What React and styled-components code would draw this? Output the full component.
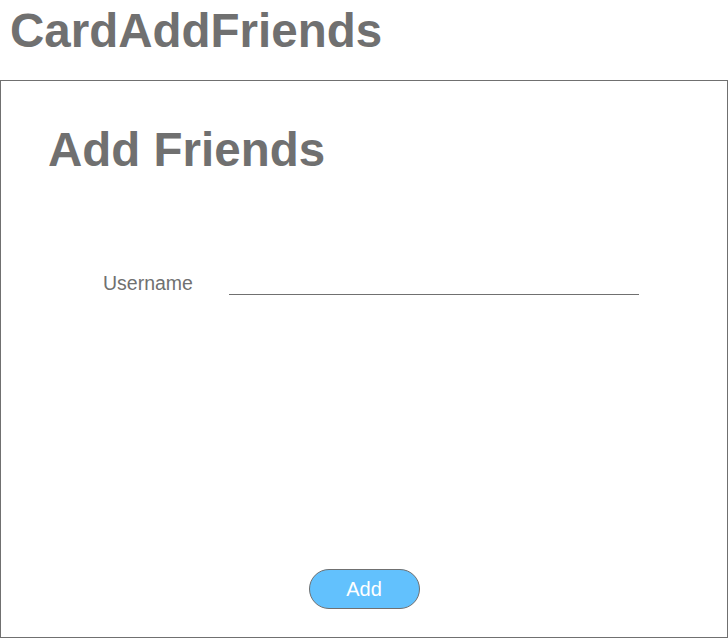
import React from 'react';
import styled, { createGlobalStyle } from 'styled-components';

const GlobalStyle = createGlobalStyle`
  html, body {
    margin: 0;
    padding: 0;
    background: #ffffff;
    font-family: 'Liberation Sans', Arial, sans-serif;
  }
`;

const Page = styled.div`
  width: 728px;
  height: 638px;
  display: flex;
  flex-direction: column;
`;

const PageTitle = styled.h1`
  margin: 0;
  height: 80px;
  padding-left: 10px;
  box-sizing: border-box;
  font-size: 47.5px;
  line-height: 61px;
  font-weight: 700;
  color: #707070;
`;

const Card = styled.div`
  flex: 1;
  border: 1px solid #707070;
  display: flex;
  flex-direction: column;
  padding: 40px 0 28px 47px;
  box-sizing: border-box;
`;

const CardTitle = styled.h2`
  margin: 0;
  font-size: 47.5px;
  line-height: 57px;
  font-weight: 700;
  color: #707070;
`;

const Field = styled.div`
  display: flex;
  align-items: flex-end;
  margin-top: 94px;
  padding-left: 55px;
`;

const Label = styled.label`
  width: 126px;
  font-size: 19.5px;
  color: #707070;
  line-height: 22px;
  padding-bottom: 1px;
`;

const Input = styled.input`
  width: 410px;
  border: none;
  border-bottom: 1px solid #707070;
  outline: none;
  height: 22px;
  padding: 0;
  font-size: 18px;
  font-family: inherit;
  background: transparent;
`;

const Actions = styled.div`
  margin-top: auto;
  display: flex;
  justify-content: center;
  padding-right: 47px;
`;

const Button = styled.button`
  width: 111px;
  height: 40px;
  border-radius: 20px;
  border: 1px solid #707070;
  background: #62c1fd;
  color: #ffffff;
  font-size: 20px;
  font-family: inherit;
  cursor: pointer;
`;

const App = () => (
  <>
    <GlobalStyle />
    <Page>
      <PageTitle>CardAddFriends</PageTitle>
      <Card>
        <CardTitle>Add Friends</CardTitle>
        <Field>
          <Label>Username</Label>
          <Input type="text" />
        </Field>
        <Actions>
          <Button>Add</Button>
        </Actions>
      </Card>
    </Page>
  </>
);

export default App;
